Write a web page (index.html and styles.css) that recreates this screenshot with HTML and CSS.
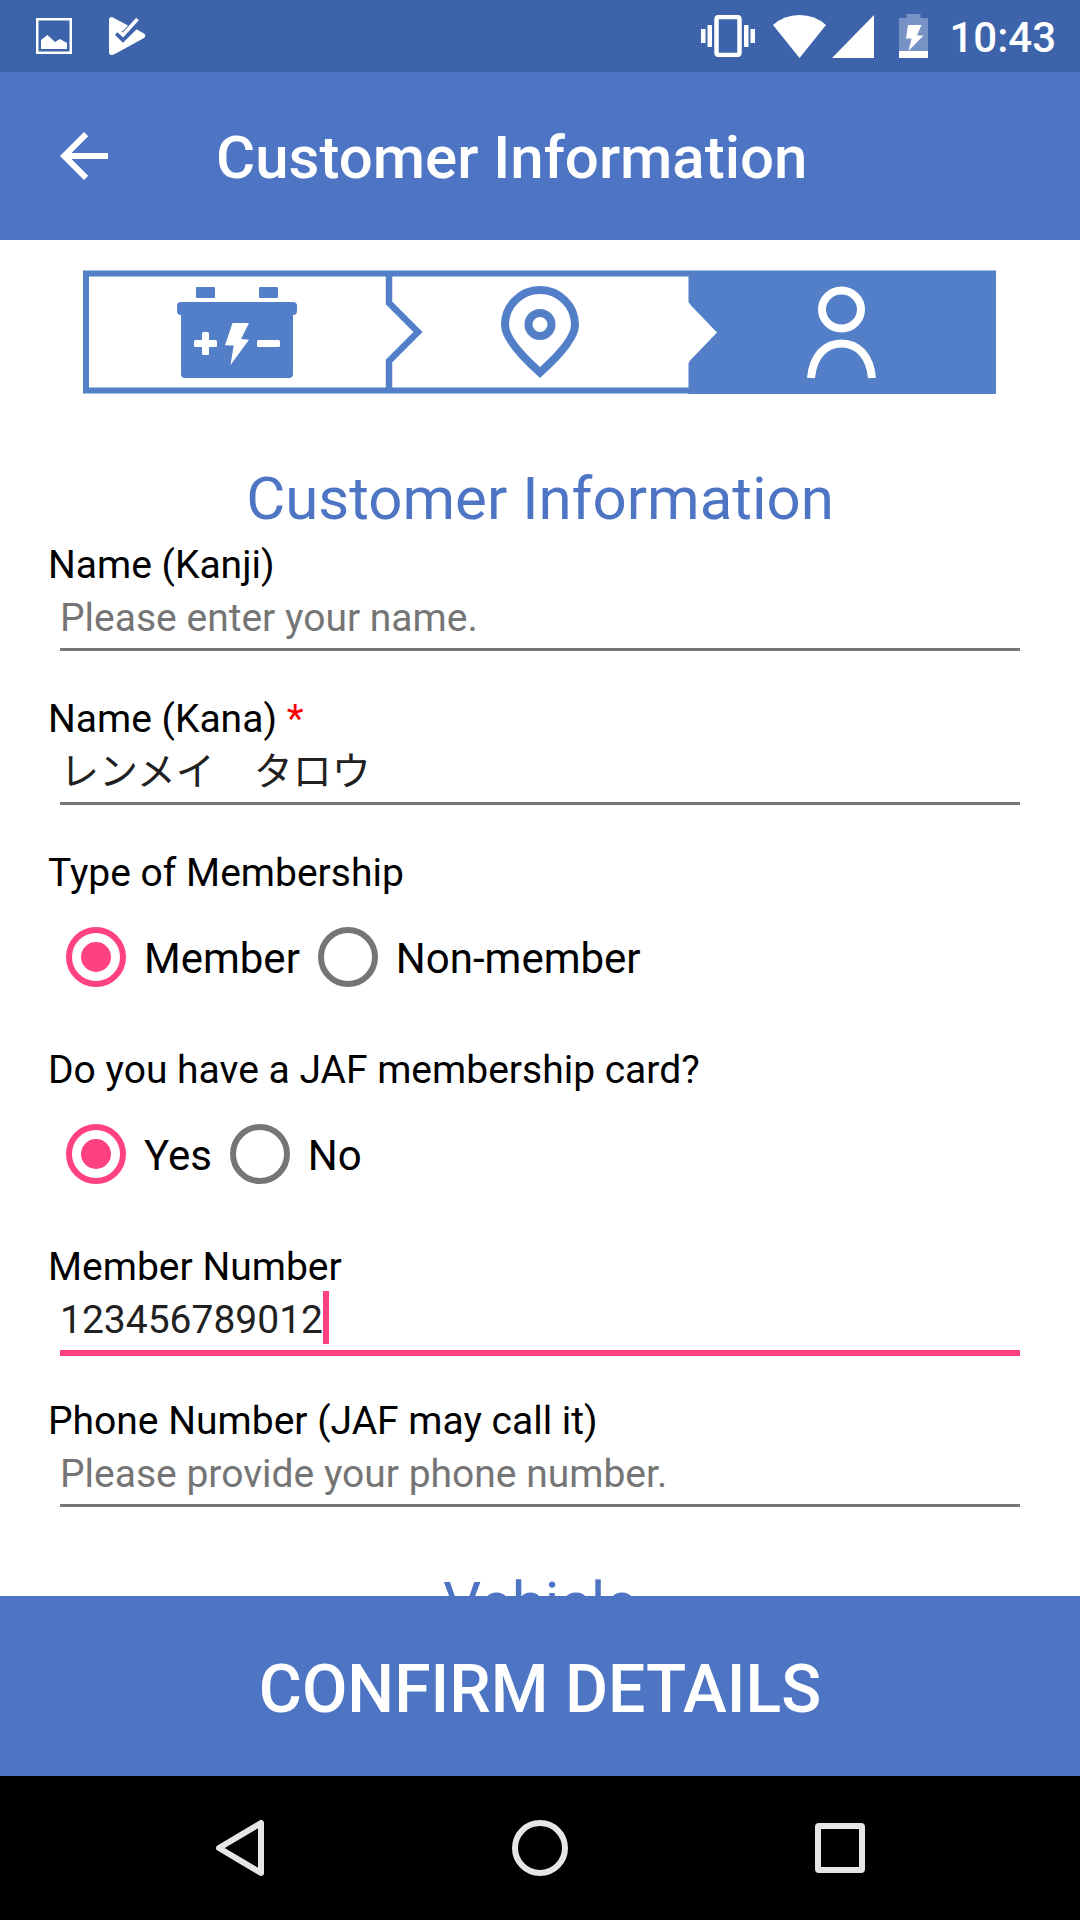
FILE: index.html
```html
<!DOCTYPE html>
<html lang="en">
<head>
    <meta charset="UTF-8">
    <meta name="viewport" content="width=device-width, initial-scale=1.0">
    <title>Customer Information</title>
    <link rel="stylesheet" href="styles.css">
</head>
<body>
    <div class="status-bar">
        <div class="status-left">
            <svg width="36" height="36" viewBox="0 0 36 36">
                <rect x="1.25" y="1.25" width="33.5" height="33.5" fill="none" stroke="#fff" stroke-width="2.5"/>
                <path d="M5 31V22l6.500-5 7.500 7 5-3 7 4v6z" fill="#fff"/>
            </svg>
            <svg width="37" height="38" viewBox="0 0 37 38">
                <path d="M0 3Q0 0 3 0L19 8.500 14 14 9.500 15 6.500 17 14 25 27 12 35 16.500Q37.500 18.500 35 21L5 37.500Q0 39 0 35z" fill="#fff"/>
                <path d="M7.500 16.500L14 23 27.500 9.500" fill="none" stroke="#3d63ab" stroke-width="4"/>
                <path d="M9 13.500L14 18 28.500 2" fill="none" stroke="#fff" stroke-width="3.500"/>
            </svg>
        </div>
        <div class="status-right">
            <svg width="54" height="42" viewBox="0 0 54 42">
                <rect x="15.500" y="2" width="23" height="38" rx="2" fill="none" stroke="#fff" stroke-width="4.500"/>
                <path d="M0 14h4.500v14H0zM6.500 10H11v22H6.500zM43 10h4.500v22H43zM49.500 14H54v14h-4.500z" fill="#fff"/>
            </svg>
            <svg class="wifi" width="53" height="43" viewBox="0 0 53 43">
                <path d="M0 10Q11 0 26.500 0T53 10L26.500 43z" fill="#fff"/>
            </svg>
            <svg class="signal" width="42" height="43" viewBox="0 0 42 43">
                <path d="M42 0v43H0z" fill="#fff"/>
            </svg>
            <svg class="battery" width="29" height="44" viewBox="0 0 29 44">
                <path d="M7.500 0h14v4H29v33H0V4h7.500z" fill="#fff" opacity=".3"/>
                <path d="M0 37h29v7H0zM9 11h13.500l-4.500 10.500h6.500L9.500 37l3-12.500H7z" fill="#fff"/>
            </svg>
            <span class="clock">10:43</span>
        </div>
    </div>

    <header class="app-bar">
        <button class="back-button" aria-label="Back">
            <svg width="72" height="72" viewBox="0 0 24 24"><path d="M20 11H7.830l5.590-5.590L12 4l-8 8 8 8 1.410-1.410L7.830 13H20z" fill="#fff"/></svg>
        </button>
        <h1 class="title">Customer Information</h1>
    </header>

    <main class="content">
        <!-- Steps: battery, location, person (current) -->
        <svg class="steps" viewBox="0 0 913 124">
            <rect x="3" y="3.500" width="907" height="117" fill="none" stroke="#537ec8" stroke-width="6"/>
            <path d="M306 1V33L335 62 306 91V123" fill="none" stroke="#537ec8" stroke-width="6.500"/>
            <path d="M605.500 1H913V124H605.500V93L608 89.500 634 62.500 608 35.500 605.500 32z" fill="#537ec8"/>
            <g fill="#537ec8">
                <rect x="113" y="17" width="19" height="11" rx="1"/>
                <rect x="176" y="17" width="19" height="11" rx="1"/>
                <rect x="94" y="32" width="120" height="13" rx="4"/>
                <rect x="98" y="36" width="112" height="72" rx="4"/>
            </g>
            <g fill="#fff">
                <rect x="111" y="70" width="23" height="7" rx="1.500"/>
                <rect x="119" y="62" width="7" height="23" rx="1.500"/>
                <rect x="174" y="70" width="23" height="7" rx="1.500"/>
                <path d="M149.500 53h16.500l-8 16 8 .700L147.500 95l3.200-19.400-8.700-.3z"/>
            </g>
            <g fill="none" stroke="#537ec8" stroke-width="8">
                <path d="M457 102.500C442 89 422 69 422 55A35 35 0 0 1 492 55C492 69 472 89 457 102.500z"/>
                <circle cx="457" cy="54.500" r="11.500"/>
            </g>
            <g fill="none" stroke="#fff" stroke-width="8">
                <ellipse cx="758.500" cy="39.500" rx="19.500" ry="19"/>
                <path d="M728 108C730 86 742 73.500 758.500 73.500S787 86 789 108"/>
            </g>
        </svg>

        <form class="form" id="customer-form">
            <h2 class="section-title">Customer Information</h2>

            <div class="field">
                <label for="name-kanji">Name (Kanji)</label>
                <div class="input-box">
                    <input type="text" id="name-kanji" placeholder="Please enter your name.">
                </div>
            </div>

            <div class="field">
                <label for="name-kana">Name (Kana) <span class="required">*</span></label>
                <div class="input-box">
                    <input type="text" id="name-kana" value="レンメイ　タロウ" lang="ja">
                </div>
            </div>

            <fieldset class="field">
                <legend>Type of Membership</legend>
                <div class="radios">
                    <label class="radio"><input type="radio" name="membership" checked><span>Member</span></label>
                    <label class="radio"><input type="radio" name="membership"><span>Non-member</span></label>
                </div>
            </fieldset>

            <fieldset class="field">
                <legend>Do you have a JAF membership card?</legend>
                <div class="radios">
                    <label class="radio"><input type="radio" name="card" checked><span>Yes</span></label>
                    <label class="radio"><input type="radio" name="card"><span>No</span></label>
                </div>
            </fieldset>

            <div class="field">
                <label for="member-number">Member Number</label>
                <div class="input-box active">
                    <input type="text" id="member-number" value="123456789012">
                    <span class="caret"></span>
                </div>
            </div>

            <div class="field">
                <label for="phone">Phone Number (JAF may call it)</label>
                <div class="input-box">
                    <input type="tel" id="phone" placeholder="Please provide your phone number.">
                </div>
            </div>

            <h2 class="section-title next">Vehicle</h2>
        </form>
    </main>

    <button class="confirm-button" type="submit" form="customer-form">CONFIRM DETAILS</button>

    <nav class="nav-bar">
        <button aria-label="Back">
            <svg width="60" height="60" viewBox="0 0 60 60"><path d="M51 5V55L9 30z" fill="none" stroke="#e6e6e6" stroke-width="6" stroke-linejoin="round"/></svg>
        </button>
        <button aria-label="Home">
            <svg width="60" height="60" viewBox="0 0 60 60"><circle cx="30" cy="30" r="25" fill="none" stroke="#e6e6e6" stroke-width="6"/></svg>
        </button>
        <button aria-label="Recent apps">
            <svg width="60" height="60" viewBox="0 0 60 60"><rect x="8" y="8" width="44" height="44" rx="1" fill="none" stroke="#e6e6e6" stroke-width="6" stroke-linejoin="round"/></svg>
        </button>
    </nav>
</body>
</html>
```

FILE: styles.css
```css
:root {
    --primary: #4d75c4;
    --primary-dark: #3d63ab;
    --accent: #ff4081;
    --gray: #757575;
}

* {
    box-sizing: border-box;
}

body {
    margin: 0;
    height: 100vh;
    display: flex;
    flex-direction: column;
    overflow: hidden;
    background: #ffffff;
    color: #000000;
    font-family: Roboto, "Noto Sans CJK JP", sans-serif;
    font-size: 39px;
    line-height: 46px;
}

button {
    padding: 0;
    border: none;
    background: none;
    font-family: inherit;
    cursor: pointer;
}

svg {
    display: block;
}

/* status bar */
.status-bar {
    flex: none;
    height: 72px;
    padding: 0 24px 0 36px;
    display: flex;
    justify-content: space-between;
    align-items: center;
    background: var(--primary-dark);
    color: #ffffff;
}

.status-left {
    display: flex;
    align-items: center;
    gap: 37px;
}

.status-right {
    display: flex;
    align-items: center;
}

.wifi {
    margin-left: 18px;
}

.signal {
    margin-left: 6px;
}

.battery {
    margin-left: 25px;
    margin-right: 21px;
}

.clock {
    padding-top: 3px;
    font-size: 42px;
    font-weight: 500;
}

/* app bar */
.app-bar {
    flex: none;
    height: 168px;
    padding: 0 48px;
    display: flex;
    align-items: center;
    gap: 96px;
    background: var(--primary);
    color: #ffffff;
}

.title {
    margin: 0;
    font-size: 60px;
    font-weight: 500;
    line-height: 70px;
    padding-top: 4px;
}

/* content */
.content {
    flex: 1;
    min-height: 0;
    overflow: hidden;
}

.steps {
    margin: 30px 84px 0 83px;
    width: calc(100% - 167px);
}

.form {
    padding: 70px 48px 0;
}

.section-title {
    margin: 0 0 8px;
    color: var(--primary);
    font-size: 60px;
    font-weight: 400;
    line-height: 70px;
    text-align: center;
}

.section-title.next {
    margin-top: 62px;
}

.field {
    margin: 0 0 45px;
    padding: 0;
    border: none;
    min-width: 0;
}

.field label,
.field legend {
    display: block;
    padding: 0;
}

.required {
    color: #ff0000;
}

.input-box {
    position: relative;
    margin: 0 12px;
}

.input-box input {
    display: block;
    width: 100%;
    height: 63px;
    padding: 3px 0 4px;
    border: none;
    border-bottom: 3px solid var(--gray);
    border-radius: 0;
    outline: none;
    background: transparent;
    color: #212121;
    font: inherit;
}

/* Japanese glyphs sit lower in the line */
.input-box input:lang(ja) {
    padding: 0 0 8px;
}

.input-box input::placeholder {
    color: var(--gray);
    opacity: 1;
}

.input-box.active input {
    border-color: var(--accent);
    box-shadow: 0 3px 0 var(--accent);
}

/* sits right after the 12 digits */
.caret {
    position: absolute;
    top: 1px;
    left: 12ch;
    width: 6px;
    height: 53px;
    background: var(--accent);
}

.radios {
    display: flex;
    gap: 18px;
    padding: 31px 18px 15px;
}

.field .radio {
    display: flex;
    align-items: center;
    gap: 18px;
    font-size: 42px;
}

.radio span {
    padding-top: 3px;
    line-height: 50px;
}

.radio input {
    appearance: none;
    flex: none;
    margin: 0;
    width: 60px;
    height: 60px;
    border: 6px solid var(--gray);
    border-radius: 50%;
}

.radio input:checked {
    border-color: var(--accent);
    padding: 9px;
    background: var(--accent) content-box;
}

/* bottom */
.confirm-button {
    flex: none;
    height: 180px;
    padding-top: 7px;
    background: var(--primary);
    color: #ffffff;
    font-size: 66px;
    font-weight: 500;
}

.nav-bar {
    flex: none;
    height: 144px;
    padding: 0 90px;
    display: flex;
    background: #000000;
}

.nav-bar button {
    flex: 1;
    display: flex;
    justify-content: center;
    align-items: center;
}
```
